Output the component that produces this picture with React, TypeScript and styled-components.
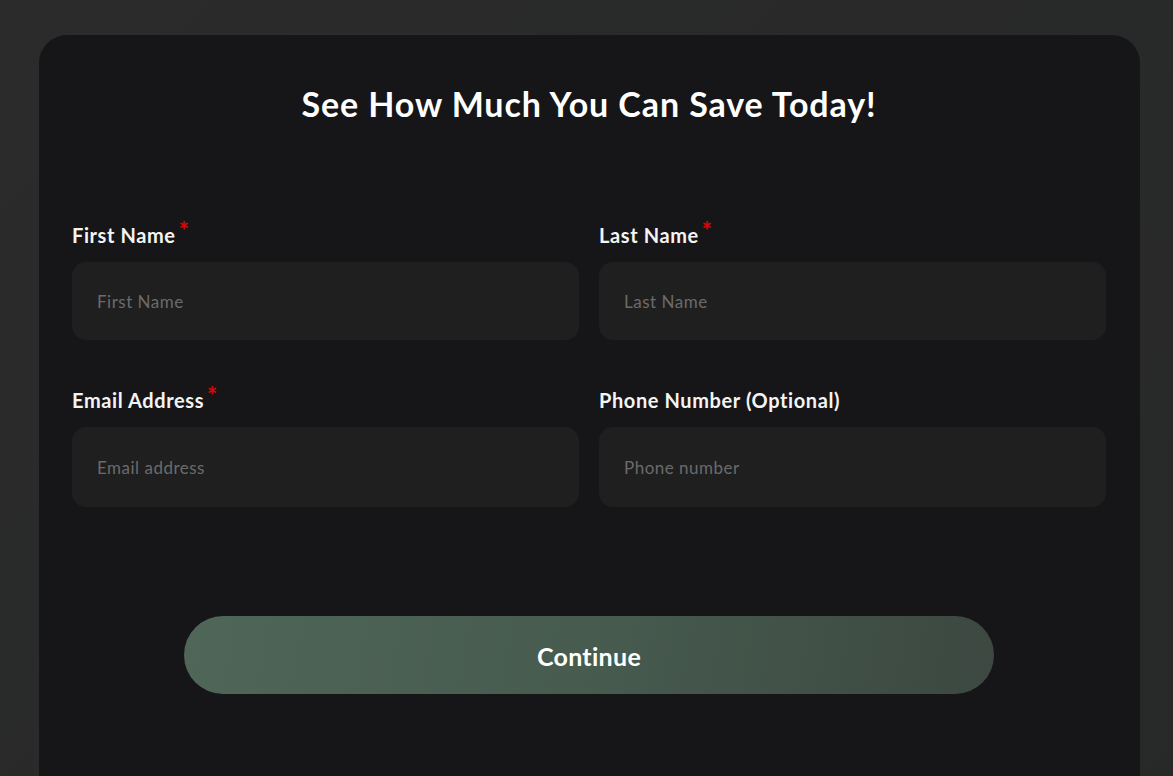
import React from "react"
import styled, { createGlobalStyle } from "styled-components"

const GlobalStyle = createGlobalStyle`
  html, body {
    margin: 0;
    padding: 0;
    background: #2a2a2a;
    font-family: "Lato", "Inter", sans-serif;
  }
  * {
    box-sizing: border-box;
  }
`

const Page = styled.div`
  width: 1173px;
  height: 776px;
  overflow: hidden;
  padding: 35px 33px 0 39px;
  background: linear-gradient(135deg, #2b2b2b 0%, #272828 100%);
`

const Card = styled.div`
  width: 1101px;
  height: 800px;
  background: #161618;
  border-radius: 28px;
  padding: 48px 34px 0 33px;
  display: flex;
  flex-direction: column;
  align-items: center;
`

const Title = styled.h1`
  margin: 0;
  font-size: 34px;
  line-height: 42px;
  font-weight: 700;
  color: #ffffff;
  letter-spacing: 0.9px;
`

const Form = styled.form`
  width: 100%;
  margin-top: 98px;
  display: grid;
  grid-template-columns: 1fr 1fr;
  column-gap: 20px;
  row-gap: 48px;
`

const Field = styled.div`
  display: flex;
  flex-direction: column;
`

const Label = styled.label`
  font-size: 20px;
  line-height: 24px;
  font-weight: 700;
  color: #f4f4f4;
  margin-bottom: 15px;
  letter-spacing: 0.6px;
  white-space: nowrap;
`

const Star = styled.span`
  color: #d00a0a;
  font-size: 24px;
  font-weight: 900;
  line-height: 0;
  position: relative;
  top: -3px;
  margin-left: 3px;
`

const Input = styled.input<{ $tall?: boolean }>`
  height: ${(p) => (p.$tall ? "80px" : "78px")};
  border: none;
  outline: none;
  border-radius: 14px;
  background: #1f1f1f;
  padding: 0 25px;
  font-family: "Lato", "Inter", sans-serif;
  font-size: 17px;
  letter-spacing: 0.5px;
  color: #eee;

  &::placeholder {
    color: #6b6b6b;
  }
`

const Button = styled.button`
  margin-top: 109px;
  width: 810px;
  height: 78px;
  border: none;
  border-radius: 39px;
  padding-top: 3px;
  background: linear-gradient(100deg, #4f6658 0%, #475b4f 50%, #3c4841 100%);
  color: #ffffff;
  font-family: "Lato", "Inter", sans-serif;
  font-size: 25px;
  font-weight: 700;
  letter-spacing: 0.3px;
  cursor: pointer;
`

const fields = [
  { label: "First Name", placeholder: "First Name", required: true },
  { label: "Last Name", placeholder: "Last Name", required: true },
  { label: "Email Address", placeholder: "Email address", required: true, tall: true },
  { label: "Phone Number (Optional)", placeholder: "Phone number", tall: true },
]

export default function App() {
  return (
    <>
      <GlobalStyle />
      <Page>
        <Card>
          <Title>See How Much You Can Save Today!</Title>
          <Form onSubmit={(e) => e.preventDefault()}>
            {fields.map((f) => (
              <Field key={f.label}>
                <Label>
                  {f.label}
                  {f.required && <Star>*</Star>}
                </Label>
                <Input placeholder={f.placeholder} $tall={f.tall} />
              </Field>
            ))}
          </Form>
          <Button type="button">Continue</Button>
        </Card>
      </Page>
    </>
  )
}
